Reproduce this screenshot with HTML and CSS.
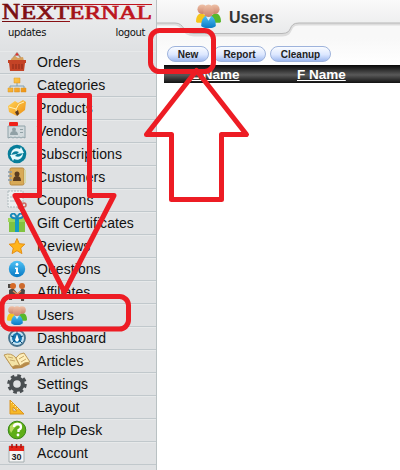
FILE: index.html
```html
<!DOCTYPE html>
<html lang="en">
<head>
<meta charset="utf-8">
<title>Users</title>
<link rel="stylesheet" href="styles.css">
</head>
<body>
<svg class="defs" width="0" height="0" aria-hidden="true">
  <defs>
    <linearGradient id="skin" x2="0" y2="1"><stop stop-color="#efc2a8"/><stop offset="1" stop-color="#cc8169"/></linearGradient>
    <linearGradient id="blue" x2="0" y2="1"><stop stop-color="#4fc2f5"/><stop offset="1" stop-color="#0879c4"/></linearGradient>
    <linearGradient id="gold" x2="1" y2="1"><stop stop-color="#ffd45a"/><stop offset="1" stop-color="#ee8f12"/></linearGradient>
    <symbol id="people" viewBox="0 0 24 24">
      <path d="M0 18c0-5 2-8 5-8s5 2 5 6l-2 3H1z" fill="#f6c51b"/>
      <path d="M24 18c0-5-2-8-5-8s-5 2-5 6l2 3h7z" fill="#58b82a"/>
      <circle cx="6" cy="6" r="4.600" fill="url(#skin)"/><circle cx="18" cy="6" r="4.600" fill="url(#skin)"/>
      <path d="M5 22c0-7 3-10 7-10s7 3 7 10c-3 3-11 3-14 0z" fill="url(#blue)"/>
      <path d="M9.500 13 12 17l2.500-4z" fill="#d5effc"/>
      <ellipse cx="12" cy="7.500" rx="5" ry="6" fill="url(#skin)"/>
    </symbol>
  </defs>
</svg>
<div class="app">
  <aside class="sidebar">
    <svg class="logo" width="156" height="24" viewBox="0 0 156 24">
      <defs><linearGradient id="red" gradientUnits="userSpaceOnUse" x1="0" x2="152"><stop stop-color="#740d10"/><stop offset=".42" stop-color="#8b1014"/><stop offset=".55" stop-color="#b5121b"/><stop offset="1" stop-color="#c4161f"/></linearGradient></defs>
      <g fill="url(#red)">
        <text class="logo-text" x="2" y="19" font-size="22.500" textLength="18" lengthAdjust="spacingAndGlyphs">N</text>
        <text class="logo-text" x="21" y="18.500" font-size="18" textLength="131" lengthAdjust="spacingAndGlyphs">EXTERNAL</text>
        <rect x="23" y="4" width="129" height="1"/><rect x="2" y="21" width="68" height="1"/>
      </g>
    </svg>
    <div class="account-links"><span>updates</span><span>logout</span></div>
    <nav class="menu">
      <div class="item"><svg viewBox="0 0 20 20"><path d="M4 9 10 1l6 8" fill="none" stroke="#a98f7c" stroke-width="1.500"/><path d="M4 7l4-3 3 2 5-1 1 4H4z" fill="#d6a15c"/><circle cx="10" cy="2.500" r="1.300" fill="#d33"/><path d="M1 8h18v3h-1l-1 8H3l-1-8H1z" fill="#c44326"/><path d="M6 12v5M9 12v5M12 12v5M15 12v5" stroke="#8c2b18"/></svg>Orders</div>
      <div class="item"><svg viewBox="0 0 20 20"><path d="M10 7v4M3 14v-3h14v3" fill="none" stroke="#7da0b5"/><g fill="url(#gold)" stroke="#d99422" stroke-width=".5"><path d="M7 3h6v5H7zM1 13h5v4H1zM7.500 13h5v4h-5zM14 13h5v4h-5z"/></g></svg>Categories</div>
      <div class="item"><svg viewBox="0 0 20 20"><path d="M1 8 8 3l3 2 5-3 3 2-1 8-8 6-8-4z" fill="url(#gold)"/><path d="m2 9 7 2 3-5M9 11l1 7M12 6l5-2" fill="none" stroke="#fff0b5"/><path d="m8 14 3-2 1 4-2 2z" fill="#5c3b22"/></svg>Products</div>
      <div class="item"><svg viewBox="0 0 20 20"><path d="M1 5h17v12l-2-1-2 1-2-1-2 1-2-1-2 1-2-1-3 1z" fill="#d2dadd" stroke="#8fa2a8"/><rect x="2" y="1" width="9" height="4" rx="1" fill="#ef2118"/><circle cx="7" cy="8.500" r="2" fill="#91a1a6"/><path d="M3 14q0-4 4-4t4 4zM13 8h3v1h-3zM13 11h3v1h-3z" fill="#91a1a6"/></svg>Vendors</div>
      <div class="item"><svg viewBox="0 0 20 20"><circle cx="10" cy="10" r="9.300" fill="#087e9a"/><path d="M4 11C4 5 9 3 13 5l1-2 3 6-7 1 2-2c-4-2-6 0-8 3zM16 9c0 6-5 8-9 6l-1 2-3-6 7-1-2 2c4 2 6 0 8-3z" fill="#e5fbfd"/></svg>Subscriptions</div>
      <div class="item"><svg viewBox="0 0 20 20"><rect x="3" y="1" width="14" height="17" rx="1.500" fill="#d8aa57" stroke="#b98a40"/><path d="M18 3v13" stroke="#d8d6a8" stroke-width="2"/><path d="M1 5h4M1 9h4M1 13h4" stroke="#879baa" stroke-width="1.500"/><circle cx="10" cy="7" r="2.500" fill="#593c20"/><path d="M6 14q0-5 4-5t4 5z" fill="#593c20"/></svg>Customers</div>
      <div class="item"><svg viewBox="0 0 20 20"><path d="M1 1h15v16H1z" fill="#eceff0" stroke="#adb9bc" stroke-dasharray="2 1"/><path d="M3 7h10M3 11h6" stroke="#b4bec2"/><g fill="none" stroke="#cb675d" stroke-width="1.500"><circle cx="17" cy="15" r="2"/><circle cx="13" cy="17" r="1.700"/><path d="m15 13-4-5"/></g></svg>Coupons</div>
      <div class="item"><svg viewBox="0 0 20 20"><path d="M2 7h16v12H2z" fill="#82c341"/><path d="M1 5h18v4H1z" fill="#9ed45e"/><path d="M8 5h4v14H8z" fill="#149bc5"/><path d="M10 5C5 6 2 3 5 1s5 4 5 4 2-6 5-4-0 5-5 4z" fill="none" stroke="#1789b9" stroke-width="2"/></svg>Gift Certificates</div>
      <div class="item"><svg viewBox="0 0 20 20"><path d="m10 2.500 2.300 5.200 5.600.5-4.200 3.800 1.200 5.600-4.900-2.900-4.900 2.900L6.300 12 2.100 8.200l5.600-.5z" fill="#ffb51c" stroke="#e58e15"/></svg>Reviews</div>
      <div class="item"><svg viewBox="0 0 20 20"><circle cx="10" cy="10" r="8.200" fill="url(#blue)"/><circle cx="10" cy="5.500" r="1.400" fill="#fff"/><path d="M8 8.500h3v5h1V15H8v-1.500h1V10H8z" fill="#fff"/></svg>Questions</div>
      <div class="item"><svg viewBox="0 0 20 20"><g fill="#4e4844"><path d="m2 8 4-2 5 6 4-6 3 2-1 11h-3v-6l-4 2-4-2-1 5H2z"/><path d="M1 2h4v4H1z"/></g><circle cx="6" cy="4" r="3" fill="#d66a27"/><circle cx="15" cy="4" r="3" fill="#ce6b2e"/><path d="m6 9 4 3 4-3" fill="none" stroke="#df8e57" stroke-width="1.500"/></svg>Affiliates</div>
      <div class="item"><svg viewBox="0 0 24 24"><use href="#people"/></svg>Users</div>
      <div class="item"><svg viewBox="0 0 20 20"><circle cx="10" cy="10" r="8" fill="#c5e5f5" stroke="#44718d" stroke-width="1.800"/><circle cx="10" cy="10" r="5" fill="#1676b2"/><path d="M10 3v4M4 8l3 1M16 8l-3 1M5 15l3-3M15 15l-3-3" stroke="#0a4b78"/><path d="m10 6 2 6-2 2-2-2z" fill="#fff"/></svg>Dashboard</div>
      <div class="item"><svg class="book" viewBox="0 0 28 20"><path d="m2 6 8 12 9-1 8-4-7-8-7 3z" fill="#b88a48"/><path d="M1 4q7-3 12 3l4 8q-4-2-8 1z" fill="#f4e3a5" stroke="#bc9859"/><path d="M13 7q3-5 8-5l6 9q-6 0-10 4z" fill="#ffefba" stroke="#bc9859"/><path d="m5 6 5 1m-3 2 5 1m4-2 5-3m-3 6 5-3" stroke="#c7a86a"/></svg>Articles</div>
      <div class="item"><svg viewBox="0 0 20 20"><circle cx="10" cy="10" r="8.300" fill="none" stroke="#4a4f52" stroke-width="3" stroke-dasharray="3.600 2.918"/><circle cx="10" cy="10" r="5.800" fill="none" stroke="#4a4f52" stroke-width="4"/></svg>Settings</div>
      <div class="item"><svg viewBox="0 0 20 20"><path fill-rule="evenodd" d="M3 3v14h14zM6 10v4h4z" fill="#f7b928" stroke="#da9422"/><path d="m4 6 1-1m1 3 1-1m1 3 1-1m1 3 1-1" stroke="#fff0a5"/></svg>Layout</div>
      <div class="item"><svg viewBox="0 0 20 20"><circle cx="10" cy="10" r="8.800" fill="#5fae18" stroke="#398817"/><path d="M3 6q6-6 12-2-7 1-11 9-2-3-1-7z" fill="#b9dc62"/><path d="M7 7q0-3 3.500-3T14 7q0 2-2.500 3v2" fill="none" stroke="#fff" stroke-width="2.300"/><circle cx="11" cy="15" r="1.400" fill="#fff"/></svg>Help Desk</div>
      <div class="item"><svg viewBox="0 0 20 20"><path d="M2 3h15v16H2z" fill="#f4f4f4" stroke="#a5aeb0"/><path d="M2 3h15v5H2z" fill="#e52419"/><path d="M5 1v4M9.500 1v4M14 1v4" stroke="#a9130e" stroke-width="1.500"/><text class="calendar-day" x="9.500" y="16.500" text-anchor="middle">30</text></svg>Account</div>
    </nav>
  </aside>
  <main class="content">
    <header class="header">
      <svg class="tab" width="243" height="38" viewBox="0 0 243 38">
        <defs><linearGradient id="tab" x2="0" y2="1"><stop stop-color="#fafafa"/><stop offset="1" stop-color="#e9eaeb"/></linearGradient></defs>
        <path d="M0 24h18c10 0 7 11 19 11h88c12 0 5-11 17-11h101" fill="none" stroke="#ddd" stroke-width="3"/>
        <path d="M-1-1V23h19c10 0 7 10.500 19 10.500h88c12 0 5-10.500 17-10.500h103V-1z" fill="url(#tab)" stroke="#b7b7b7"/>
      </svg>
      <div class="title"><svg width="25" height="25" viewBox="0 0 24 24"><use href="#people"/></svg><h1>Users</h1></div>
    </header>
    <div class="toolbar"><button class="new">New</button><button class="report">Report</button><button class="cleanup">Cleanup</button></div>
    <div class="table-head"><span>L Name</span><span>F Name</span></div>
  </main>
  <svg class="annotations" width="400" height="470" viewBox="0 0 400 470">
    <rect x="150.500" y="30.500" width="63" height="41" rx="9"/>
    <rect x="2" y="296.500" width="126.500" height="32.500" rx="9"/>
    <path d="M39.500 95.500h50v100h24.500L64.500 292 15 195.500h24.500z"/>
    <path d="m196.500 70.500 50 64h-25v65h-50v-65h-25z"/>
  </svg>
</div>
</body>
</html>
```
FILE: styles.css
```css
* { box-sizing: border-box; }
body { margin: 0; font-family: "Liberation Sans", Arial, sans-serif; color: #111; background: #fff; }
.defs { position: absolute; }
.app { position: relative; display: flex; width: 400px; height: 470px; overflow: hidden; }
.sidebar { width: 157px; flex: none; background: linear-gradient(#eeeff0, #dfe1e3 50px); border-right: 1px solid #b9c1c3; }
.logo { display: block; }
.logo-text { font-family: "Liberation Serif", serif; stroke: url(#red); stroke-width: .7; }
.account-links { height: 27px; padding: 2px 11px 0 8px; display: flex; justify-content: space-between; font: 10px/14px "DejaVu Sans", sans-serif; letter-spacing: -.35px; }
.menu { border-top: 1px solid #e7e9ea; }
.item { height: 23px; padding: 0 0 1px 7px; border-bottom: 1px solid #c1c8cc; border-top: 1px solid #e7e9ea; display: flex; align-items: center; gap: 10px; font-size: 14px; line-height: 20px; letter-spacing: .07px; }
.item:first-child { height: 22px; border-top: 0; }
.item svg { width: 20px; height: 20px; flex: none; }
.item .book { width: 28px; margin: 0 -4px; }
.calendar-day { font: bold 9px "Liberation Sans", sans-serif; fill: #222; }
.content { flex: 1; min-width: 0; }
.header { height: 38px; display: grid; background: #f8f8f8; }
.tab, .title { grid-area: 1 / 1; }
.title { display: flex; align-items: flex-start; gap: 8px; padding: 3px 0 0 39px; }
h1 { margin: 5px 0 0; color: #333; font-size: 16px; line-height: 20px; }
.toolbar { height: 27px; padding: 8px 0 0 10px; background: linear-gradient(#f8f8f8, #fff); display: flex; gap: 4px; }
button { height: 16px; padding: 0; border: 1px solid #9eb3dc; border-radius: 8px; background: linear-gradient(#fafcff, #dce7ff 55%, #9fb9ef); font: bold 10px/13px "Liberation Sans", sans-serif; color: #222; }
.new { width: 42px; }
.report { width: 53px; }
.cleanup { width: 61px; }
.table-head { margin-left: 7px; height: 18px; padding-left: 27px; display: grid; grid-template-columns: 106px 1fr; background: linear-gradient(#080808, #595959 55%, #111); color: #fff; font: bold 13.500px/19px "Liberation Sans", sans-serif; }
.table-head span { text-decoration: underline; }
.annotations { position: absolute; inset: 0; pointer-events: none; fill: none; stroke: #ed1c24; stroke-width: 5; stroke-linejoin: round; }
```
